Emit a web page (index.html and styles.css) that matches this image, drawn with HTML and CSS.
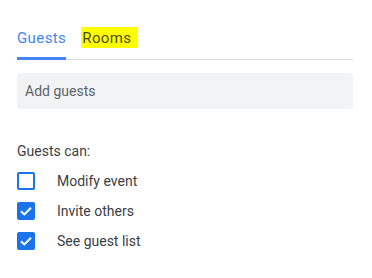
FILE: index.html
```html
<!DOCTYPE html>
<html>
<head>
<meta charset="utf-8">
<link rel="stylesheet" href="styles.css">
</head>
<body>
<div class="panel">
  <div class="tabs">
    <div class="tab active">Guests</div>
    <div class="tab"><span class="mark">Rooms</span></div>
  </div>
  <div class="input">Add guests</div>
  <div class="heading">Guests can:</div>
  <div class="row">
    <span class="box"></span>
    <span class="label">Modify event</span>
  </div>
  <div class="row">
    <span class="box checked"><svg width="18" height="18" viewBox="0 0 18 18"><polyline points="4,9.2 7.3,12.4 14,5.8" fill="none" stroke="#fff" stroke-width="2"/></svg></span>
    <span class="label">Invite others</span>
  </div>
  <div class="row">
    <span class="box checked"><svg width="18" height="18" viewBox="0 0 18 18"><polyline points="4,9.2 7.3,12.4 14,5.8" fill="none" stroke="#fff" stroke-width="2"/></svg></span>
    <span class="label">See guest list</span>
  </div>
</div>
</body>
</html>
```
FILE: styles.css
```css
html, body {
  margin: 0;
  background: #fff;
}
body {
  font-family: Roboto, "Liberation Sans", Arial, sans-serif;
  color: #3c4043;
}
.panel {
  width: 336px;
  padding: 28px 0 0 17px;
}
.tabs {
  display: flex;
  gap: 16px;
  border-bottom: 1px solid #dadce0;
}
.tab {
  font-size: 15px;
  font-weight: 400;
  letter-spacing: 0.4px;
  line-height: 20px;
  padding-bottom: 9px;
  border-bottom: 3px solid transparent;
  margin-bottom: -1px;
  color: #3c4043;
}
.tab.active {
  color: #4285f4;
  border-bottom-color: #4285f4;
  border-radius: 0;
}
.mark {
  background: #ffff00;
  color: #4d4a1f;
  padding: 2px 7px 1px 1px;
  margin-left: -1px;
}
.input {
  margin-top: 13px;
  height: 36px;
  line-height: 36px;
  background: #f1f3f4;
  border-radius: 4px;
  padding-left: 8px;
  font-size: 14px;
  color: #5f6368;
}
.heading {
  margin-top: 32px;
  font-size: 14px;
  line-height: 20px;
  color: #3c4043;
}
.heading + .row {
  margin-top: 5px;
}
.row {
  display: flex;
  align-items: center;
  height: 30px;
  gap: 22px;
}
.box {
  box-sizing: border-box;
  width: 18px;
  height: 18px;
  border: 2px solid #1a73e8;
  border-radius: 2px;
  display: flex;
  align-items: center;
  justify-content: center;
}
.box.checked {
  background: #1a73e8;
}
.box svg {
  flex: none;
}
.label {
  font-size: 14px;
  line-height: 20px;
  color: #3c4043;
}
```
